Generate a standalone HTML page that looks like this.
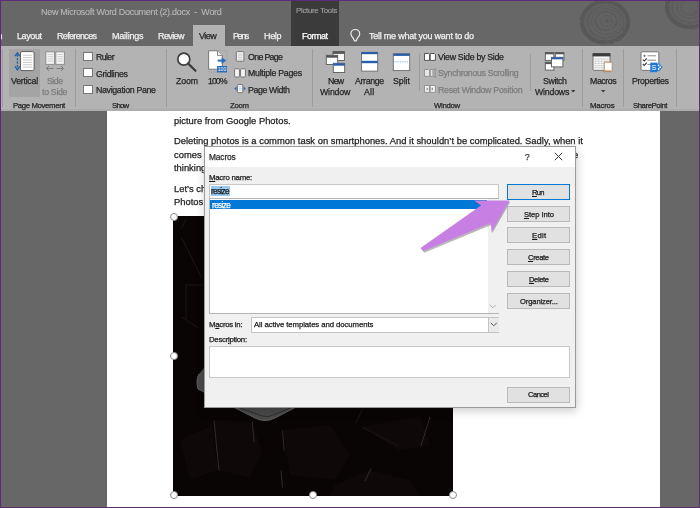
<!DOCTYPE html>
<html><head><meta charset="utf-8"><title>Word</title>
<style>
*{margin:0;padding:0;box-sizing:border-box}
html,body{width:700px;height:508px;overflow:hidden;background:#676767;font-family:"Liberation Sans",sans-serif}
.r{position:absolute}
.t{position:absolute;white-space:nowrap;font-family:"Liberation Sans",sans-serif;will-change:transform;-webkit-text-stroke:0.25px currentColor}
</style></head><body>
<div class="r" style="left:0;top:0;width:700px;height:46px;background:#676767"></div>
<svg class="r" style="left:0;top:0" width="700" height="46" viewBox="0 0 700 46">
<defs><filter id="rough" x="-20%" y="-20%" width="140%" height="140%">
<feTurbulence type="fractalNoise" baseFrequency="0.35" numOctaves="2" seed="3"/>
<feDisplacementMap in="SourceGraphic" scale="2.5"/></filter></defs>
<g filter="url(#rough)">
 <ellipse cx="605" cy="22" rx="23" ry="20.5" fill="#626262" stroke="#585858" stroke-width="4.2"/>
 <g fill="none" stroke="#5a5a5a">
 <ellipse cx="605.5" cy="22" rx="18" ry="16" stroke-width="1.2"/>
 <ellipse cx="606" cy="21.5" rx="14.5" ry="13" stroke-width="1"/>
 <ellipse cx="606" cy="21" rx="10.5" ry="9.5" stroke-width="1.3"/>
 <ellipse cx="606.5" cy="21" rx="6" ry="5.5" stroke-width="1"/>
 </g>
 <circle cx="607" cy="20.8" r="1.6" fill="#575757"/>
 <ellipse cx="690" cy="7" rx="23" ry="20" fill="#626262" stroke="#585858" stroke-width="4.2"/>
 <g fill="none" stroke="#5a5a5a">
 <ellipse cx="690" cy="7" rx="18" ry="15.5" stroke-width="1.2"/>
 <ellipse cx="690" cy="7" rx="13.5" ry="11.5" stroke-width="1"/>
 <ellipse cx="690" cy="7" rx="9" ry="8" stroke-width="1.2"/>
 </g>
</g></svg>
<div class="r" style="left:291px;top:0;width:48px;height:46px;background:#3b3b3b"></div>
<div class="t" style="left:41.40px;top:6.91px;font-size:9px;line-height:10.35px;letter-spacing:-0.293px;color:#b9b9b9;white-space:pre;-webkit-text-stroke:0.1px currentColor;">New Microsoft Word Document (2).docx  -  Word</div>
<div class="t" style="left:295.50px;top:7.41px;font-size:7.8px;line-height:8.97px;letter-spacing:-0.267px;color:#a4a4a4;-webkit-text-stroke:0.1px currentColor;">Picture Tools</div>
<div class="r" style="left:193px;top:25px;width:32px;height:22px;background:#b3b3b3"></div>
<div class="t" style="left:-22.00px;top:30.91px;font-size:9px;line-height:10.35px;letter-spacing:-0.680px;color:#f0f0f0;">Design</div>
<div class="t" style="left:17.00px;top:30.91px;font-size:9px;line-height:10.35px;letter-spacing:-0.400px;color:#f0f0f0;">Layout</div>
<div class="t" style="left:57.00px;top:30.91px;font-size:9px;line-height:10.35px;letter-spacing:-0.667px;color:#f0f0f0;">References</div>
<div class="t" style="left:111.75px;top:30.91px;font-size:9px;line-height:10.35px;letter-spacing:-0.214px;color:#f0f0f0;">Mailings</div>
<div class="t" style="left:158.00px;top:30.91px;font-size:9px;line-height:10.35px;letter-spacing:-0.610px;color:#f0f0f0;">Review</div>
<div class="t" style="left:199.25px;top:30.91px;font-size:9px;line-height:10.35px;letter-spacing:-0.550px;color:#262626;">View</div>
<div class="t" style="left:232.50px;top:30.91px;font-size:9px;line-height:10.35px;letter-spacing:-1.417px;color:#f0f0f0;">Pens</div>
<div class="t" style="left:263.75px;top:30.91px;font-size:9px;line-height:10.35px;letter-spacing:-0.333px;color:#f0f0f0;">Help</div>
<div class="t" style="left:302.20px;top:30.91px;font-size:9px;line-height:10.35px;letter-spacing:-0.500px;color:#ffffff;">Format</div>
<div class="t" style="left:369.25px;top:30.91px;font-size:9px;line-height:10.35px;letter-spacing:-0.233px;color:#f0f0f0;">Tell me what you want to do</div>
<svg class="r" style="left:349px;top:28px" width="13" height="15" viewBox="0 0 13 15">
<path d="M4.3 10.2 C2.6 8.6 1.9 7.4 1.9 5.9 A4.4 4.4 0 0 1 10.7 5.9 C10.7 7.4 10 8.6 8.3 10.2 L7.3 12.8 H5.3 Z" fill="none" stroke="#ececec" stroke-width="1.2" stroke-linejoin="round"/>
</svg>
<div class="r" style="left:0;top:46px;width:700px;height:65px;background:#b3b3b3"></div>
<div class="r" style="left:0;top:109px;width:700px;height:2px;background:#acacac"></div>
<div class="r" style="left:2.0px;top:49px;width:1px;height:58px;background:#9c9c9c"></div>
<div class="r" style="left:75.1px;top:49px;width:1px;height:58px;background:#9c9c9c"></div>
<div class="r" style="left:165.9px;top:49px;width:1px;height:58px;background:#9c9c9c"></div>
<div class="r" style="left:312.0px;top:49px;width:1px;height:58px;background:#9c9c9c"></div>
<div class="r" style="left:581.8px;top:49px;width:1px;height:58px;background:#9c9c9c"></div>
<div class="r" style="left:623.3px;top:49px;width:1px;height:58px;background:#9c9c9c"></div>
<div class="r" style="left:676.0px;top:49px;width:1px;height:58px;background:#9c9c9c"></div>
<div class="r" style="left:418.9px;top:54px;width:1px;height:37px;background:#9c9c9c"></div>
<div class="r" style="left:529.9px;top:54px;width:1px;height:37px;background:#9c9c9c"></div>
<div class="r" style="left:9px;top:49px;width:31px;height:48px;background:#a4a4a4"></div>
<svg class="r" style="left:9px;top:49px" width="31" height="25" viewBox="0 0 31 25">
<rect x="11.5" y="2.6" width="13.6" height="19" rx="1.5" fill="#fff" stroke="#5e5e5e" stroke-width="1"/>
<g stroke="#c8c8c8" stroke-width="1"><path d="M14 6.2H23M14 8.6H23M14 11H23M14 13.4H23M14 15.8H23M14 18.2H23"/></g>
<path d="M8.4 5.5V19" stroke="#1f5fae" stroke-width="1.3" stroke-dasharray="2.2 1.3"/>
<path d="M6 7.2 L8.4 4 L10.8 7.2 M6 17.4 L8.4 20.8 L10.8 17.4" fill="none" stroke="#1f5fae" stroke-width="1.4"/>
</svg>
<div class="t" style="left:10.70px;top:75.79px;font-size:8.8px;line-height:10.12px;letter-spacing:-0.250px;color:#262626;">Vertical</div>
<svg class="r" style="left:44px;top:50px" width="24" height="22" viewBox="0 0 24 22">
<rect x="1.8" y="1.8" width="8.6" height="12.6" fill="#f4f4f4" stroke="#8e8e8e" stroke-width="1"/>
<rect x="11.8" y="1.8" width="8.6" height="12.6" fill="#f4f4f4" stroke="#8e8e8e" stroke-width="1"/>
<g stroke="#cfcfcf"><path d="M3.5 4.5H9M3.5 6.7H9M3.5 8.9H9M3.5 11.1H9M13.5 4.5H19M13.5 6.7H19M13.5 8.9H19M13.5 11.1H19"/></g>
<path d="M2.5 18.5H9.5M5 16L2.5 18.5L5 21M12.5 18.5H19.5M17 16L19.5 18.5L17 21" fill="none" stroke="#7c7c7c" stroke-width="1"/>
</svg>
<div class="t" style="left:46.90px;top:75.79px;font-size:8.8px;line-height:10.12px;letter-spacing:-0.500px;color:#7c7c7c;">Side</div>
<div class="t" style="left:42.20px;top:86.79px;font-size:8.8px;line-height:10.12px;letter-spacing:-0.317px;color:#7c7c7c;">to Side</div>
<div class="t" style="left:12.60px;top:101.91px;font-size:7.8px;line-height:8.97px;letter-spacing:-0.375px;color:#262626;">Page Movement</div>
<div class="r" style="left:83px;top:52.2px;width:10px;height:9px;background:#fff;border:1px solid #767676"></div>
<div class="r" style="left:83px;top:68.4px;width:10px;height:9px;background:#fff;border:1px solid #767676"></div>
<div class="r" style="left:83px;top:84.7px;width:10px;height:9px;background:#fff;border:1px solid #767676"></div>
<div class="t" style="left:96.10px;top:52.19px;font-size:8.8px;line-height:10.12px;letter-spacing:-0.612px;color:#262626;">Ruler</div>
<div class="t" style="left:96.10px;top:68.59px;font-size:8.8px;line-height:10.12px;letter-spacing:-0.344px;color:#262626;">Gridlines</div>
<div class="t" style="left:96.00px;top:84.59px;font-size:8.8px;line-height:10.12px;letter-spacing:-0.329px;color:#262626;">Navigation Pane</div>
<div class="t" style="left:112.40px;top:101.71px;font-size:7.8px;line-height:8.97px;letter-spacing:-0.800px;color:#262626;">Show</div>
<svg class="r" style="left:174px;top:50px" width="26" height="24" viewBox="0 0 26 24">
<circle cx="9.8" cy="9.2" r="6" fill="#fff" stroke="#3c3c3c" stroke-width="1.7"/>
<path d="M14.2 13.6 L21.5 20.8" stroke="#3c3c3c" stroke-width="2.2" stroke-linecap="round"/>
</svg>
<div class="t" style="left:176.00px;top:76.09px;font-size:8.8px;line-height:10.12px;letter-spacing:-0.133px;color:#262626;">Zoom</div>
<svg class="r" style="left:206px;top:49px" width="24" height="26" viewBox="0 0 24 26">
<path d="M12 1.8 H20.8 V23.2 H2.6 V20.6" fill="none" stroke="#9a9a9a" stroke-width="0.7" stroke-dasharray="1 0.8"/>
<path d="M2.6 1.8 H11.5 L16.3 6.6 V20.2 H2.6 Z" fill="#fff" stroke="#6e6e6e" stroke-width="0.9"/>
<path d="M11.5 1.8 V6.6 H16.3" fill="#e8e8e8" stroke="#6e6e6e" stroke-width="0.8"/>
<path d="M11.6 11.6 H16.5" stroke="#2b6cb8" stroke-width="2"/>
<path d="M15.6 8.2 L20.2 11.6 L15.6 15 Z" fill="#2b6cb8"/>
<rect x="11" y="17" width="10" height="6.4" fill="#2b6cb8"/>
<text x="16" y="22.2" font-size="5" fill="#fff" text-anchor="middle" font-family="Liberation Sans">100</text>
</svg>
<div class="t" style="left:207.90px;top:76.09px;font-size:8.8px;line-height:10.12px;letter-spacing:-1.000px;color:#262626;">100%</div>
<svg class="r" style="left:233px;top:50px" width="14" height="44" viewBox="0 0 14 44">
<rect x="3.3" y="1.6" width="7.6" height="9.6" rx="0.8" fill="#f4f4f4" stroke="#6a6a6a" stroke-width="0.9"/>
<g stroke="#c6c6c6" stroke-width="0.8"><path d="M4.8 4H9.4M4.8 5.8H9.4M4.8 7.6H9.4M4.8 9.4H9.4"/></g>
<rect x="1.6" y="18.8" width="4.8" height="8.2" rx="0.8" fill="#f4f4f4" stroke="#6a6a6a" stroke-width="0.9"/>
<rect x="7.6" y="18.8" width="4.8" height="8.2" rx="0.8" fill="#f4f4f4" stroke="#6a6a6a" stroke-width="0.9"/>
<rect x="4.4" y="34.5" width="5.4" height="8.2" rx="0.8" fill="#f4f4f4" stroke="#6a6a6a" stroke-width="0.9"/>
<g stroke="#c6c6c6" stroke-width="0.7"><path d="M5.6 36.6H8.6M5.6 38.4H8.6M5.6 40.2H8.6"/></g>
<path d="M1.2 38.6 L3.6 36.4 L3.6 40.8 Z M12.8 38.6 L10.6 36.4 L10.6 40.8 Z" fill="#2b6cb8"/>
</svg>
<div class="t" style="left:247.90px;top:52.19px;font-size:8.8px;line-height:10.12px;letter-spacing:-0.664px;color:#262626;">One Page</div>
<div class="t" style="left:248.00px;top:68.49px;font-size:8.8px;line-height:10.12px;letter-spacing:-0.277px;color:#262626;">Multiple Pages</div>
<div class="t" style="left:248.00px;top:84.79px;font-size:8.8px;line-height:10.12px;letter-spacing:-0.389px;color:#262626;">Page Width</div>
<div class="t" style="left:229.60px;top:101.71px;font-size:7.8px;line-height:8.97px;letter-spacing:-0.317px;color:#262626;">Zoom</div>
<svg class="r" style="left:325px;top:50px" width="22" height="24" viewBox="0 0 22 24">
<rect x="8" y="1.5" width="11.4" height="9" fill="#fff" stroke="#5a5a5a" stroke-width="0.9"/>
<rect x="8" y="1.5" width="11.4" height="2.4" fill="#555"/>
<rect x="1.3" y="5.3" width="11.4" height="9.2" fill="#fff" stroke="#5a5a5a" stroke-width="0.9"/>
<rect x="1.3" y="5.3" width="11.4" height="2.4" fill="#555"/>
<rect x="8.3" y="13.3" width="11.4" height="9.2" fill="#fff" stroke="#5a5a5a" stroke-width="0.9"/>
<rect x="8.3" y="13.3" width="11.4" height="2.4" fill="#2b5ea8"/>
</svg>
<div class="t" style="left:327.60px;top:75.99px;font-size:8.8px;line-height:10.12px;letter-spacing:-0.725px;color:#262626;">New</div>
<div class="t" style="left:320.20px;top:86.99px;font-size:8.8px;line-height:10.12px;letter-spacing:-0.190px;color:#262626;">Window</div>
<svg class="r" style="left:359px;top:50px" width="21" height="23" viewBox="0 0 21 23">
<rect x="2.5" y="2.3" width="16.2" height="18.8" fill="#fff" stroke="#6a6a6a" stroke-width="0.9"/>
<rect x="2.5" y="2" width="16.2" height="2.2" fill="#2b5ea8"/>
<rect x="2.5" y="10.8" width="16.2" height="2.4" fill="#2b5ea8"/>
</svg>
<div class="t" style="left:354.80px;top:75.99px;font-size:8.8px;line-height:10.12px;letter-spacing:-0.367px;color:#262626;">Arrange</div>
<div class="t" style="left:364.20px;top:86.99px;font-size:8.8px;line-height:10.12px;letter-spacing:0.250px;color:#262626;">All</div>
<svg class="r" style="left:391px;top:51px" width="21" height="22" viewBox="0 0 21 22">
<rect x="2.3" y="2.8" width="16.4" height="16.8" fill="#fff" stroke="#6a6a6a" stroke-width="0.9"/>
<rect x="2.3" y="2.6" width="16.4" height="2.3" fill="#2b5ea8"/>
<path d="M3.5 10.8H17.5" stroke="#6f9fd8" stroke-width="0.8" stroke-dasharray="1 0.8"/>
</svg>
<div class="t" style="left:392.90px;top:75.99px;font-size:8.8px;line-height:10.12px;letter-spacing:-0.050px;color:#262626;">Split</div>
<svg class="r" style="left:422px;top:50px" width="16" height="44" viewBox="0 0 16 44">
<path d="M2.5 3.5 H6.5 L7.6 4.6 V10.4 H2.5 Z M8.2 3.5 H12.3 L13.4 4.6 V10.4 H8.2 Z" fill="#fff" stroke="#454545" stroke-width="0.9"/>
<path d="M2.5 19.5 H6.5 L7.6 20.6 V26.4 H2.5 Z M8.2 19.5 H11 V26.4 H8.2 Z" fill="#e6e6e6" stroke="#8c8c8c" stroke-width="0.9"/>
<path d="M13.2 18.5 V27.5 M11.8 20 L13.2 18.5 L14.6 20 M11.8 26 L13.2 27.5 L14.6 26" fill="none" stroke="#8c8c8c" stroke-width="0.8"/>
<path d="M2.5 35.5 H7.4 V42.4 H2.5 Z M8.2 35.5 H13.4 V42.4 H8.2 Z" fill="#f2f2f2" stroke="#8c8c8c" stroke-width="0.9"/>
<path d="M6.6 39 L4.6 37.6 V40.4 Z M9 39 L11 37.6 V40.4 Z" fill="#8c8c8c"/>
</svg>
<div class="t" style="left:437.80px;top:52.39px;font-size:8.8px;line-height:10.12px;letter-spacing:-0.300px;color:#262626;">View Side by Side</div>
<div class="t" style="left:437.80px;top:68.49px;font-size:8.8px;line-height:10.12px;letter-spacing:-0.343px;color:#7c7c7c;">Synchronous Scrolling</div>
<div class="t" style="left:437.80px;top:84.69px;font-size:8.8px;line-height:10.12px;letter-spacing:-0.295px;color:#7c7c7c;">Reset Window Position</div>
<div class="t" style="left:433.60px;top:101.71px;font-size:7.8px;line-height:8.97px;letter-spacing:-0.320px;color:#262626;">Window</div>
<svg class="r" style="left:543px;top:50px" width="24" height="23" viewBox="0 0 24 23">
<rect x="2.3" y="2.5" width="8.6" height="7.8" fill="#fff" stroke="#5a5a5a" stroke-width="0.9"/>
<rect x="2.3" y="2.5" width="8.6" height="1.8" fill="#555"/>
<rect x="12.3" y="2.5" width="8.6" height="7.8" fill="#fff" stroke="#5a5a5a" stroke-width="0.9"/>
<rect x="12.3" y="2.5" width="8.6" height="1.8" fill="#555"/>
<rect x="2.3" y="12.3" width="8.6" height="7.8" fill="#fff" stroke="#5a5a5a" stroke-width="0.9"/>
<rect x="2.3" y="12.3" width="8.6" height="1.8" fill="#555"/>
<rect x="8.5" y="7.3" width="11.4" height="9.6" fill="#fff" stroke="#5a5a5a" stroke-width="0.9"/>
<rect x="8.5" y="7.3" width="11.4" height="2" fill="#2b5ea8"/>
</svg>
<div class="t" style="left:543.00px;top:75.99px;font-size:8.8px;line-height:10.12px;letter-spacing:-0.400px;color:#262626;">Switch</div>
<div class="t" style="left:535.10px;top:86.99px;font-size:8.8px;line-height:10.12px;letter-spacing:-0.217px;color:#262626;">Windows</div>
<svg class="r" style="left:571px;top:90px" width="5" height="3"><path d="M0 0H4.4L2.2 2.6Z" fill="#3a3a3a"/></svg>
<svg class="r" style="left:591px;top:51px" width="24" height="23" viewBox="0 0 24 23">
<rect x="2" y="2.6" width="17" height="16.8" rx="1" fill="#f6f6f6" stroke="#6a6a6a" stroke-width="0.9"/>
<rect x="1.6" y="2.2" width="17.8" height="3.2" fill="#3c3c3c"/>
<g stroke="#b8b8b8" stroke-width="0.8" stroke-dasharray="2.2 0.8"><path d="M3.5 8H18M3.5 10.2H18M3.5 12.4H18M3.5 14.6H18M3.5 16.8H18"/></g>
<path d="M13.2 11.2 H20.8 L21.2 12.2 V20.2 H13.2 Z" fill="#fff" stroke="#b98a60" stroke-width="1"/>
<path d="M12 19.6 H19.5 V21 H12 Z" fill="#b98a60"/>
<path d="M13.8 21.6V22.4M16 21.6V22.4M18.2 21.6V22.4" stroke="#b98a60" stroke-width="0.9"/>
</svg>
<div class="t" style="left:589.70px;top:75.99px;font-size:8.8px;line-height:10.12px;letter-spacing:-0.430px;color:#262626;">Macros</div>
<svg class="r" style="left:601px;top:90px" width="5" height="3"><path d="M0 0H4.4L2.2 2.6Z" fill="#3a3a3a"/></svg>
<div class="t" style="left:590.20px;top:101.71px;font-size:7.8px;line-height:8.97px;letter-spacing:-0.190px;color:#262626;">Macros</div>
<svg class="r" style="left:639px;top:50px" width="26" height="24" viewBox="0 0 26 24">
<rect x="2" y="1.8" width="17.8" height="18.6" rx="1" fill="#fff" stroke="#6a6a6a" stroke-width="0.9"/>
<circle cx="5.5" cy="5.8" r="1.1" fill="#6a6a6a"/>
<path d="M8.5 5.8H17M8.5 10.2H17M8.5 14.4H12" stroke="#8a8a8a" stroke-width="1"/>
<path d="M3.8 9.6L5.3 11L7.8 8.3M3.8 14L5.3 15.4L7.8 12.7" fill="none" stroke="#3a3a3a" stroke-width="1.1"/>
<path d="M16.5 14 L20 13.2 L23.6 17.2 L20 21.2 L16.5 20.5 Z" fill="#1f78d1"/>
<circle cx="19.6" cy="15.4" r="0.9" fill="#fff"/><circle cx="21.2" cy="17.2" r="0.9" fill="#fff"/><circle cx="19.6" cy="19" r="0.9" fill="#fff"/>
<rect x="11.3" y="12.6" width="7" height="9.6" fill="#1f78d1"/>
<text x="14.8" y="20.2" font-size="7" fill="#fff" text-anchor="middle" font-family="Liberation Sans">S</text>
</svg>
<div class="t" style="left:631.70px;top:75.99px;font-size:8.8px;line-height:10.12px;letter-spacing:-0.356px;color:#262626;">Properties</div>
<div class="t" style="left:632.50px;top:101.71px;font-size:7.8px;line-height:8.97px;letter-spacing:-0.456px;color:#262626;">SharePoint</div>
<div class="r" style="left:0;top:111px;width:700px;height:397px;background:#676767"></div>
<div class="r" style="left:107px;top:111px;width:553px;height:397px;background:#fff"></div>
<div class="t" style="left:174.20px;top:115.74px;font-size:9.4px;line-height:10.81px;letter-spacing:-0.002px;color:#1e1e1e;">picture from Google Photos.</div>
<div class="t" style="left:174.00px;top:136.34px;font-size:9.4px;line-height:10.81px;letter-spacing:0.011px;color:#1e1e1e;">Deleting photos is a common task on smartphones. And it shouldn’t be complicated. Sadly, when it</div>
<div class="r" style="left:0;top:0;width:560px;height:508px;overflow:hidden">
<div class="t" style="left:174.10px;top:149.74px;font-size:9.4px;line-height:10.81px;letter-spacing:0.000px;color:#1e1e1e;">comes to deleting from Google Photos, it gets a bit confusing as users keep wondering what could be the</div>
</div>
<div class="t" style="left:572.60px;top:149.74px;font-size:9.4px;line-height:10.81px;letter-spacing:0.000px;color:#1e1e1e;">e</div>
<div class="r" style="left:0;top:0;width:0;height:0"></div>
<div class="t" style="left:174.10px;top:163.04px;font-size:9.4px;line-height:10.81px;letter-spacing:0.000px;color:#1e1e1e;">thinking about what will happen to the photos when you delete them</div>
<div class="t" style="left:174.10px;top:183.64px;font-size:9.4px;line-height:10.81px;letter-spacing:0.000px;color:#1e1e1e;">Let’s check out how to delete photos from Google Photos on Android and</div>
<div class="t" style="left:174.10px;top:197.04px;font-size:9.4px;line-height:10.81px;letter-spacing:0.000px;color:#1e1e1e;">Photos app.</div>
<svg class="r" style="left:173px;top:216px" width="280" height="280" viewBox="173 216 280 280">
<rect x="173" y="216" width="280" height="280" fill="#0a0505"/>
<g fill="#0e0808">
<path d="M214 420 L252 422 L262 452 L250 478 L218 470 Z"/>
<path d="M283 430 L330 425 L350 455 L335 480 L290 475 Z"/>
<path d="M362 427 L420 416 L430 445 L398 450 Z"/>
<path d="M335 485 L370 470 L410 480 L420 496 L330 496 Z"/>
<path d="M180 440 L212 425 L218 470 L190 480 Z"/>
</g>
<g fill="none" stroke="#1c1515" stroke-width="1">
<path d="M186 219 L181.5 228 M181.5 237.5 L201.6 277.8 M186 284 L186 319 M186 285 L202 285 M181.5 317 L198 327.6"/>
<path d="M362 410 L356 423 M361.7 427 L398 445.7"/>
</g>
<g fill="none" stroke="#302a2a" stroke-width="1">
<path d="M214 420.5 L219 470.7 M252.4 422 L254 442 M282.5 430.5 L284.2 450.6 M281 470.7 L282.5 487.5 M430 417 L421 445.7 M371 468.6 L365 481"/>
</g>
<path d="M204 368 L199 374 Q195.5 380 198 389 L255 418 Q265 423 275 418 L300 405 L300 368 Z" fill="#4a4a4a"/>
<path d="M199 374 Q195.5 380 198 389 L255 418 Q265 423 275 418 L300 405" fill="none" stroke="#5c5c5c" stroke-width="1"/>
<path d="M240 408 L262 416 Q268 418 276 414 L290 408" fill="none" stroke="#2e2e2e" stroke-width="1"/>
</svg>
<div class="r" style="left:169.5px;top:212.5px;width:8px;height:8px;border-radius:50%;background:#fff;border:1px solid #8a8a8a"></div>
<div class="r" style="left:309.0px;top:212.5px;width:8px;height:8px;border-radius:50%;background:#fff;border:1px solid #8a8a8a"></div>
<div class="r" style="left:448.5px;top:212.5px;width:8px;height:8px;border-radius:50%;background:#fff;border:1px solid #8a8a8a"></div>
<div class="r" style="left:169.5px;top:352.0px;width:8px;height:8px;border-radius:50%;background:#fff;border:1px solid #8a8a8a"></div>
<div class="r" style="left:448.5px;top:352.0px;width:8px;height:8px;border-radius:50%;background:#fff;border:1px solid #8a8a8a"></div>
<div class="r" style="left:169.5px;top:491.3px;width:8px;height:8px;border-radius:50%;background:#fff;border:1px solid #8a8a8a"></div>
<div class="r" style="left:309.0px;top:491.3px;width:8px;height:8px;border-radius:50%;background:#fff;border:1px solid #8a8a8a"></div>
<div class="r" style="left:448.5px;top:491.3px;width:8px;height:8px;border-radius:50%;background:#fff;border:1px solid #8a8a8a"></div>
<div class="r" style="left:204px;top:146px;width:372px;height:262px;background:#f0f0f0;border:1px solid #9b9b9b;box-shadow:1px 3px 9px rgba(0,0,0,0.2)"></div>
<div class="r" style="left:205px;top:147px;width:370px;height:20px;background:#fff"></div>
<div class="t" style="left:209.10px;top:152.76px;font-size:8.4px;line-height:9.66px;letter-spacing:-0.130px;color:#2b2b2b;">Macros</div>
<div class="t" style="left:524.80px;top:152.86px;font-size:8.4px;line-height:9.66px;letter-spacing:0.000px;color:#333;">?</div>
<svg class="r" style="left:554px;top:152px" width="9" height="9"><path d="M0.8 0.8L8.2 8.2M8.2 0.8L0.8 8.2" stroke="#333" stroke-width="1"/></svg>
<div class="t" style="left:208.70px;top:173.71px;font-size:7.8px;line-height:8.97px;letter-spacing:-0.230px;color:#1a1a1a;"><u>M</u>acro name:</div>
<div class="r" style="left:209px;top:184px;width:290px;height:15px;background:#fff;border:1px solid #c8c8c8"></div>
<div class="r" style="left:210.5px;top:186.2px;width:19.5px;height:9.5px;background:#99c8f0"></div>
<div class="t" style="left:211.00px;top:187.24px;font-size:8.2px;line-height:9.43px;letter-spacing:-0.670px;color:#1a1a1a;">resize</div>
<div class="r" style="left:209px;top:198px;width:290px;height:116px;background:#fff;border:1px solid #b4b4b4"></div>
<div class="r" style="left:487.5px;top:199px;width:11px;height:114px;background:#f0f0f0"></div>
<svg class="r" style="left:489px;top:304px" width="8" height="5"><path d="M0.8 0.8L3.8 3.8L6.8 0.8" fill="none" stroke="#a6a6a6" stroke-width="0.9"/></svg>
<div class="r" style="left:210px;top:200px;width:277px;height:8.5px;background:#0078d7"></div>
<div class="t" style="left:211.60px;top:200.54px;font-size:8.2px;line-height:9.43px;letter-spacing:-0.590px;color:#fff;">resize</div>
<div class="t" style="left:209.30px;top:320.81px;font-size:7.8px;line-height:8.97px;letter-spacing:-0.267px;color:#1a1a1a;">M<u>a</u>cros in:</div>
<div class="r" style="left:250.5px;top:316.5px;width:248.5px;height:16px;background:#fff;border:1px solid #c4c4c4"></div>
<div class="r" style="left:487.5px;top:317.5px;width:11px;height:14px;background:#e9e9e9;border-left:1px solid #c4c4c4"></div>
<svg class="r" style="left:489.5px;top:322px" width="8" height="5"><path d="M0.8 0.8L3.8 3.8L6.8 0.8" fill="none" stroke="#555" stroke-width="1"/></svg>
<div class="t" style="left:253.60px;top:320.81px;font-size:7.8px;line-height:8.97px;letter-spacing:-0.100px;color:#1a1a1a;">All active templates and documents</div>
<div class="t" style="left:209.30px;top:335.51px;font-size:7.8px;line-height:8.97px;letter-spacing:-0.282px;color:#1a1a1a;">Descr<u>i</u>ption:</div>
<div class="r" style="left:209px;top:346px;width:361px;height:31.5px;background:#fff;border:1px solid #c8c8c8"></div>
<div class="r" style="left:507px;top:184.3px;width:63px;height:16px;background:#e1e1e1;border:1.5px solid #0078d7"></div>
<div class="t" style="left:532.10px;top:189.10px;font-size:7.6px;line-height:8.74px;letter-spacing:-0.725px;color:#1a1a1a;"><u>R</u>un</div>
<div class="r" style="left:507px;top:205.7px;width:63px;height:16px;background:#e1e1e1;border:1px solid #b9b9b9"></div>
<div class="t" style="left:523.50px;top:210.50px;font-size:7.6px;line-height:8.74px;letter-spacing:-0.050px;color:#1a1a1a;"><u>S</u>tep Into</div>
<div class="r" style="left:507px;top:227.3px;width:63px;height:16px;background:#e1e1e1;border:1px solid #b9b9b9"></div>
<div class="t" style="left:531.50px;top:232.10px;font-size:7.6px;line-height:8.74px;letter-spacing:0.300px;color:#1a1a1a;"><u>E</u>dit</div>
<div class="r" style="left:507px;top:249.1px;width:63px;height:16px;background:#e1e1e1;border:1px solid #b9b9b9"></div>
<div class="t" style="left:528.00px;top:253.90px;font-size:7.6px;line-height:8.74px;letter-spacing:-0.360px;color:#1a1a1a;"><u>C</u>reate</div>
<div class="r" style="left:507px;top:271px;width:63px;height:16px;background:#e1e1e1;border:1px solid #b9b9b9"></div>
<div class="t" style="left:528.50px;top:275.80px;font-size:7.6px;line-height:8.74px;letter-spacing:-0.390px;color:#1a1a1a;"><u>D</u>elete</div>
<div class="r" style="left:507px;top:292.8px;width:63px;height:16px;background:#e1e1e1;border:1px solid #b9b9b9"></div>
<div class="t" style="left:519.50px;top:297.60px;font-size:7.6px;line-height:8.74px;letter-spacing:-0.118px;color:#1a1a1a;">Organizer...</div>
<div class="r" style="left:507px;top:386.5px;width:63px;height:16px;background:#e1e1e1;border:1px solid #b9b9b9"></div>
<div class="t" style="left:528.00px;top:391.30px;font-size:7.6px;line-height:8.74px;letter-spacing:-0.530px;color:#1a1a1a;">Cancel</div>
<svg class="r" style="left:0;top:0" width="700" height="508" viewBox="0 0 700 508">
<path d="M509.5 200.5 L474 200.5 L481 205.5 L420.5 248 L423.5 251.5 L491 223.5 L491.5 232 Z" fill="#3a3a3a" opacity="0.35" transform="translate(0.8,1.2)"/>
<path d="M509.5 200.5 L474 200.5 L481 205.5 L420.5 248 L423.5 251 L491 223 L491.5 232 Z" fill="#c77fe3"/>
</svg>
<div class="r" style="left:0;top:0;width:700px;height:508px;border:1px solid #5b2a78"></div>
</body></html>
